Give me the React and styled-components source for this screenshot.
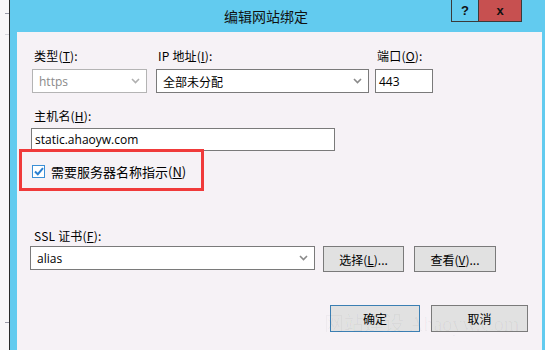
import React from 'react';
import styled, { createGlobalStyle } from 'styled-components';

const CYAN = '#62cbef';
const BG = '#f6f2f6';

const GlobalStyle = createGlobalStyle`
  html, body {
    margin: 0;
    padding: 0;
    height: 350px;
    overflow: hidden;
    background: #f8f6f8;
  }
  body {
    font-family: "Noto Sans CJK SC", "Noto Sans", sans-serif;
    font-size: 12px;
    color: #000;
  }
`;

const Page = styled.div`
  position: relative;
  display: flex;
  width: 545px;
  height: 350px;
`;

const Strip = styled.div`
  width: 9px;
  flex: none;
  background: #f8f6f8;
  display: flex;
  flex-direction: column;
  align-items: flex-end;
`;

const Tick = styled.div`
  width: 4px;
  height: 1px;
  margin-top: ${(p) => p.top}px;
  background: ${(p) => p.color || '#9a9aa8'};
`;

const Window = styled.div`
  flex: 1;
  display: flex;
  flex-direction: column;
  border-left: 1px solid #2a2a2a;
  background: ${CYAN};
`;

const TitleBar = styled.div`
  height: 32px;
  flex: none;
  display: flex;
  align-items: flex-start;
`;

const Title = styled.div`
  flex: 1;
  padding-left: 214px;
  line-height: 32px;
  font-size: 14px;
  color: #111;
`;

const CaptionButton = styled.div`
  width: ${(p) => p.width}px;
  height: 22px;
  box-sizing: border-box;
  border: 1px solid #3a3a3a;
  border-top: none;
  border-left: ${(p) => (p.first ? '1px solid #3a3a3a' : 'none')};
  background: ${(p) => p.bg};
  display: flex;
  align-items: center;
  justify-content: center;
  font-family: "Liberation Sans", sans-serif;
  font-weight: 700;
  font-size: 13px;
  color: #111;
`;

const Captions = styled.div`
  display: flex;
  margin-right: 23px;
`;

const Content = styled.div`
  flex: 1;
  margin: 0 3px 0 7px;
  background: ${BG};
  padding: 16px 0 0 15px;
  display: flex;
  flex-direction: column;
`;

const Row = styled.div`
  display: flex;
  align-items: flex-start;
  gap: ${(p) => p.gap || 0}px;
  margin-top: ${(p) => p.mt || 0}px;
`;

const Field = styled.div`
  display: flex;
  flex-direction: column;
  flex: none;
  width: ${(p) => p.width}px;
  margin-left: ${(p) => p.ml || 0}px;
`;

const Label = styled.div`
  height: 16px;
  line-height: 16px;
  padding-left: 2px;
  margin-bottom: ${(p) => p.mb || 5}px;
  font-size: 12px;
  white-space: nowrap;
  letter-spacing: 0.2px;
`;

const Box = styled.div`
  flex: none;
  height: ${(p) => p.h || 24}px;
  box-sizing: border-box;
  margin-left: ${(p) => p.ml || 0}px;
  border: 1px solid ${(p) => (p.disabled ? '#b4b4b4' : '#7a7a7a')};
  background: #fff;
  display: flex;
  align-items: center;
  padding: 0 6px 0 ${(p) => p.pl || 6}px;
  font-family: ${(p) => (p.latin ? '"Open Sans", "Noto Sans", sans-serif' : '"Noto Sans CJK SC", sans-serif')};
  font-size: 12px;
  color: ${(p) => (p.disabled ? '#8a8a8a' : '#000')};
  width: ${(p) => (p.width ? `${p.width}px` : 'auto')};
`;

const BoxText = styled.span`
  flex: 1;
  white-space: nowrap;
`;

const Chevron = ({ color = '#8a8a8a' }) => (
  <svg width="9" height="6" viewBox="0 0 9 6">
    <path d="M1 1 L4.5 4.5 L8 1" fill="none" stroke={color} strokeWidth="1.6" />
  </svg>
);

const SniBox = styled.div`
  width: 185px;
  height: 42px;
  box-sizing: border-box;
  margin: -2px 0 0 -13px;
  border: 3px solid #f03a3a;
  display: flex;
  align-items: center;
  padding: 3px 0 0 10px;
  gap: 6px;
`;

const Check = styled.div`
  width: 13px;
  height: 13px;
  box-sizing: border-box;
  border: 1px solid #3b8fd6;
  background: #fff;
  display: flex;
  align-items: center;
  justify-content: center;
`;

const CheckLabel = styled.span`
  font-size: 13px;
  white-space: nowrap;
`;

const Button = styled.div`
  flex: none;
  width: ${(p) => p.width}px;
  height: ${(p) => p.h || 26}px;
  margin-left: ${(p) => p.ml || 0}px;
  box-sizing: border-box;
  border: 1px solid ${(p) => (p.primary ? '#3b7fb3' : '#7a7a7a')};
  background: #e1e1e1;
  display: flex;
  align-items: center;
  justify-content: center;
  font-size: 12px;
  white-space: nowrap;
`;

const Footer = styled.div`
  display: flex;
  justify-content: flex-end;
  margin-top: 33px;
  padding-right: 14px;
`;

const Watermark = styled.div`
  position: absolute;
  left: 324px;
  top: 308px;
  font-family: "Liberation Serif", "Noto Sans CJK SC", serif;
  font-size: 20px;
  color: rgba(0, 0, 0, 0.035);
  white-space: nowrap;
  pointer-events: none;
`;

export default function App() {
  return (
    <>
      <GlobalStyle />
      <Page>
        <Strip>
          <Tick top={13} />
          <Tick top={20} color="#d6d6dc" />
          <Tick top={287} />
        </Strip>
        <Window>
          <TitleBar>
            <Title>编辑网站绑定</Title>
            <Captions>
              <CaptionButton width={28} bg={CYAN} first>?</CaptionButton>
              <CaptionButton width={43} bg="#c75050">x</CaptionButton>
            </Captions>
          </TitleBar>
          <Content>
            <Row>
              <Field width={115}>
                <Label>类型(<u>T</u>):</Label>
                <Box disabled latin>
                  <BoxText>https</BoxText>
                  <Chevron color="#b0b0b0" />
                </Box>
              </Field>
              <Field width={213} ml={9}>
                <Label>IP 地址(<u>I</u>):</Label>
                <Box>
                  <BoxText>全部未分配</BoxText>
                  <Chevron />
                </Box>
              </Field>
              <Field width={58} ml={6}>
                <Label>端口(<u>O</u>):</Label>
                <Box latin pl={3}>
                  <BoxText>443</BoxText>
                </Box>
              </Field>
            </Row>
            <Row mt={15}>
              <Field width={303}>
                <Label mb={4}>主机名(<u>H</u>):</Label>
                <Box latin h={23} pl={3} ml={-1}>
                  <BoxText>static.ahaoyw.com</BoxText>
                </Box>
              </Field>
            </Row>
            <SniBox>
              <Check>
                <svg width="10" height="9" viewBox="0 0 10 9">
                  <path d="M1 4.5 L3.8 7.2 L9 1.2" fill="none" stroke="#2b7fd0" strokeWidth="2" />
                </svg>
              </Check>
              <CheckLabel>需要服务器名称指示(<u>N</u>)</CheckLabel>
            </SniBox>
            <Row mt={37}>
              <Field width={470}>
                <Label mb={2}>SSL 证书(<u>F</u>):</Label>
                <Row>
                  <Box latin width={285} ml={-2}>
                    <BoxText>alias</BoxText>
                    <Chevron />
                  </Box>
                  <Button width={81} ml={8}>选择(<u>L</u>)...</Button>
                  <Button width={82} ml={10}>查看(<u>V</u>)...</Button>
                </Row>
              </Field>
            </Row>
            <Footer>
              <Button width={90} h={27} primary>确定</Button>
              <Button width={97} h={27} ml={11}>取消</Button>
            </Footer>
          </Content>
        </Window>
        <Watermark>网站建设 Ahaoyw.Com</Watermark>
      </Page>
    </>
  );
}
